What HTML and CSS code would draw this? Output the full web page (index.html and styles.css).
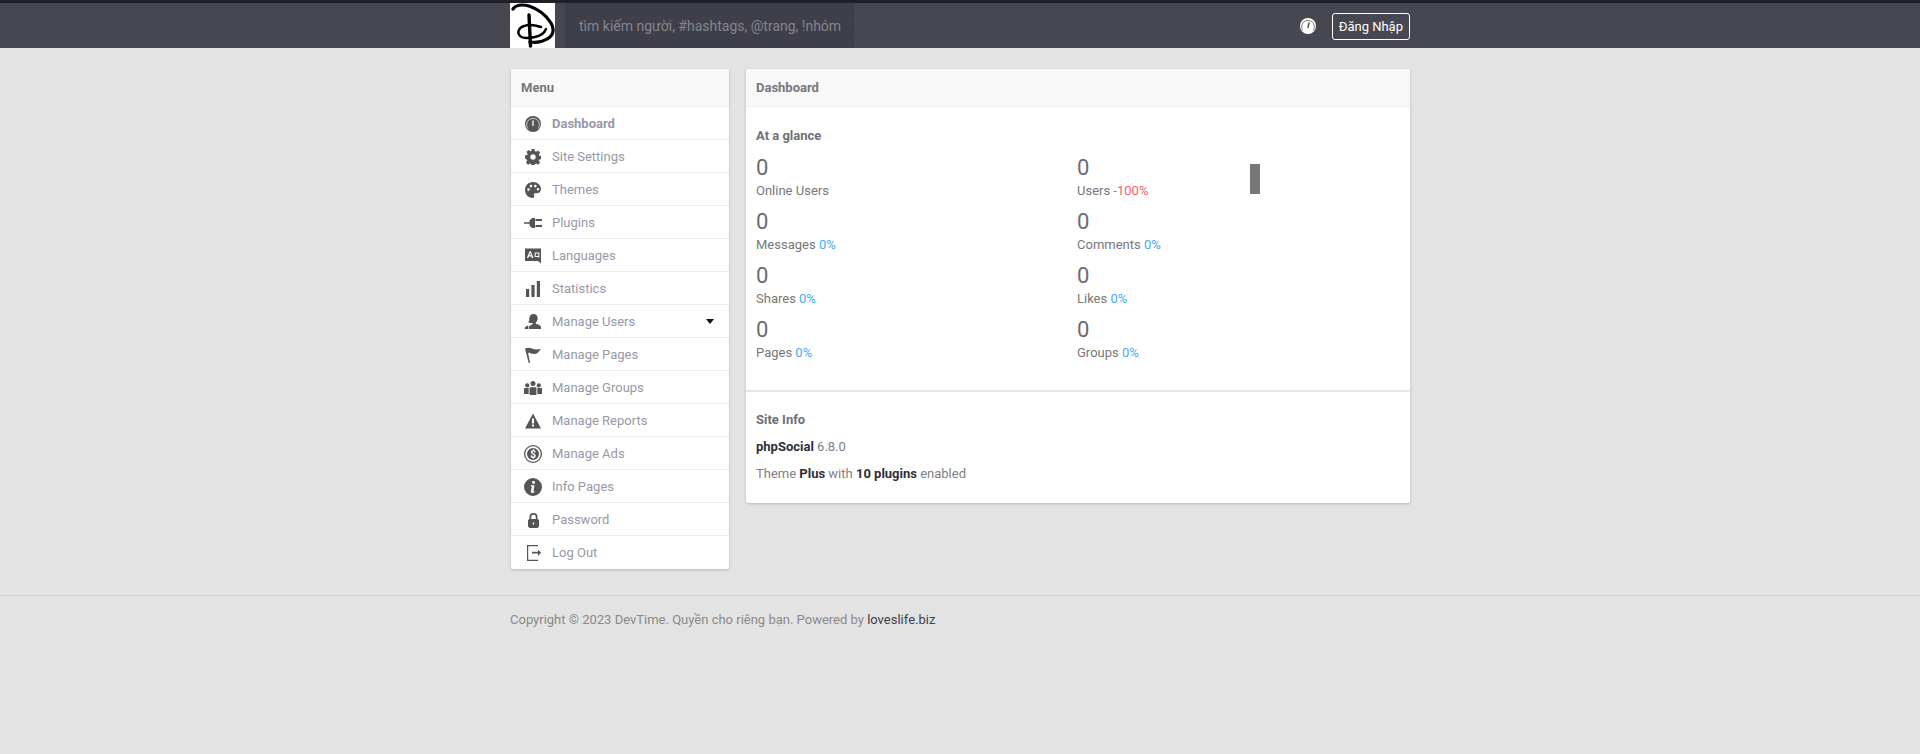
FILE: index.html
```html
<!DOCTYPE html>
<html lang="vi">
<head>
<meta charset="utf-8">
<title>Dashboard</title>
<link rel="stylesheet" href="styles.css">
</head>
<body>
<header class="topbar">
  <div class="wrap topbar-inner">
    <a class="logo" href="#">
      <svg viewBox="0 0 45 45" width="45" height="45"><g fill="none" stroke="#000" stroke-linecap="round"><path d="M3 6C5 2 12 1 19 3c9 3 17 9 22 17 4 7 2 13-4 16-5 3-11 4-17 3" stroke-width="3.200"/><path d="M19 12l1.500 31" stroke-width="3.400"/><path d="M31 24c-6-2-12-3-17-1-6 2-7 7-4 10 3 3 10 2 15 1 5-1 9-3 11-8" stroke-width="2.400"/></g></svg>
    </a>
    <div class="search">tìm kiếm người, #hashtags, @trang, !nhóm</div>
    <div class="top-actions">
      <svg class="gauge-top" viewBox="0 0 16 16" width="16" height="16"><circle cx="8" cy="8" r="8" fill="#fff"/><path fill="none" stroke="#484852" stroke-width=".7" d="M2.800 12.500A6.400 6.400 0 1 1 13.200 12.500"/><path fill="none" stroke="#484852" stroke-width="1.400" stroke-linecap="round" d="M8 9.500 9 5"/></svg>
      <a class="login" href="#">Đăng Nhập</a>
    </div>
  </div>
</header>

<main class="wrap layout">
  <aside class="card menu">
    <div class="card-head">Menu</div>
    <ul class="menu-list">
      <li class="active"><svg class="ico" viewBox="0 0 16 16"><circle cx="8" cy="8" r="8"/><path class="cut" stroke-width=".7" d="M2.800 12.500A6.400 6.400 0 1 1 13.200 12.500"/><path class="cut" stroke-width="1.300" stroke-linecap="round" d="M8 9.500 8 5"/></svg>Dashboard</li>
      <li><svg class="ico" viewBox="0 0 16 16"><path fill-rule="evenodd" d="M6.500 0h3l.4 2.300 1.200.5 1.900-1.300 2.100 2.100-1.300 1.900.5 1.200 2.300.4v3l-2.300.4-.5 1.200 1.300 1.900-2.100 2.100-1.900-1.300-1.200.5-.4 2.300h-3l-.4-2.300-1.200-.5-1.900 1.300-2.100-2.100 1.300-1.900-.5-1.200L-.1 9.500v-3l2.300-.4.5-1.200L1.400 3l2.100-2.100 1.900 1.300 1.200-.5zM8 5.300a2.700 2.700 0 1 0 0 5.400 2.700 2.700 0 0 0 0-5.400z"/></svg>Site Settings</li>
      <li><svg class="ico" viewBox="0 0 16 16"><path fill-rule="evenodd" d="M8 0c4.400 0 8 3 8 7 0 2.700-2 4.300-4.500 4.300H10c-1 0-1.500.8-1 1.600.5.900.2 3.100-1.200 3.100C3.400 16 0 12.400 0 8s3.600-8 8-8zM3.500 6.200a1.300 1.300 0 1 0 0 2.600 1.300 1.300 0 0 0 0-2.600zM6 2.800a1.300 1.300 0 1 0 0 2.600 1.300 1.300 0 0 0 0-2.600zM10.300 2.800a1.300 1.300 0 1 0 0 2.600 1.300 1.300 0 0 0 0-2.600zM13 6a1.300 1.300 0 1 0 0 2.600A1.300 1.300 0 0 0 13 6z"/></svg>Themes</li>
      <li><svg class="ico ico-18" viewBox="0 0 18 12"><path d="M0 5.200h5.500V3.400L8 1h3v10H8L5.500 8.600V6.800H0zM11.500 2H18v2h-6.500zM11.500 8H18v2h-6.500z"/></svg>Plugins</li>
      <li><svg class="ico" viewBox="0 0 16 16"><path fill-rule="evenodd" d="M0 .5h16v15l-3-2.500H0zM4.600 3.200 1.800 10h1.500l.5-1.400h2.600l.5 1.400h1.500L5.800 3.200zM5.200 5l.8 2.300H4.300zM9.700 4.500V9h3.300l1.300 1V4.500zM10.700 5.500h2.600v2.500h-2.600z"/></svg>Languages</li>
      <li><svg class="ico" viewBox="0 0 16 16"><path d="M1 8h3.200v8H1zM6.400 4h3.200v12H6.400zM11.800 0H15v16h-3.200z"/></svg>Statistics</li>
      <li class="has-caret"><svg class="ico ico-18" viewBox="0 0 17 16"><path d="M9 0c2.600 0 4.200 1.800 4.200 4.300 0 1.800-.8 3.300-1.900 4.100v1.300c2.400.7 5.200 1.800 5.200 3.300V15H4.500v-1.700c0-1.400 1.600-2.700 3.700-3.400V9C6.500 9.200 4.600 9 3.600 8.300c.9-.8 1.200-2 1.200-3.800C4.800 1.900 6.500 0 9 0z"/><path d="M0 15c0-1.900 1.600-2.900 3.800-3.500V15z"/></svg>Manage Users<i class="caret"></i></li>
      <li><svg class="ico" viewBox="0 0 16 16"><path d="M0 1.500C2.500 .3 4.800 .5 7 1.500c2.800 1.200 5.600 1.200 9 .3-1.200 1.700-2.300 3.100-3.800 4.500-2.800 1.300-4.600.9-7.400-.3-.6-.2-1.100-.3-1.700-.2L5 16H3.700z"/></svg>Manage Pages</li>
      <li><svg class="ico ico-18" viewBox="0 0 18 14"><circle cx="9" cy="2.600" r="2.500"/><circle cx="3.200" cy="4.400" r="2.100"/><circle cx="14.800" cy="4.400" r="2.100"/><path d="M5.600 6.200h6.800V14H5.600zM0 7h4.700v6H0zM13.300 7H18v6h-4.700z"/></svg>Manage Groups</li>
      <li><svg class="ico" viewBox="0 0 16 15"><path fill-rule="evenodd" d="M8 0l8 15H0zM7 5v5h2V5zM7 11v2h2v-2z"/></svg>Manage Reports</li>
      <li><svg class="ico ico-18 tall" viewBox="0 0 18 18"><path fill-rule="evenodd" d="M9 0a9 9 0 1 1 0 18A9 9 0 0 1 9 0zM9 1.300a7.700 7.700 0 1 0 0 15.400A7.700 7.700 0 0 0 9 1.300zM9 3a6 6 0 1 1 0 12A6 6 0 0 1 9 3z"/><text class="dollar" x="9" y="12.800" text-anchor="middle">$</text></svg>Manage Ads</li>
      <li><svg class="ico ico-18 tall" viewBox="0 0 16 16"><path fill-rule="evenodd" d="M8 0a8 8 0 1 1 0 16A8 8 0 0 1 8 0zM8.500 2.700a1.300 1.300 0 1 0 0 2.600 1.300 1.300 0 0 0 0-2.600zM6 6.500v1h1l-.9 4.200c-.2 1.200.6 1.800 1.700 1.600l1.500-.6v-.9H8.400l.9-5.300z"/></svg>Info Pages</li>
      <li><svg class="ico ico-lock" viewBox="0 0 11 15"><path fill-rule="evenodd" d="M1.500 6V4a4 4 0 0 1 8 0v2l1.500 1v6.500L9.500 15h-8L0 13.500V7zM3.200 6h4.600V4a2.300 2.300 0 0 0-4.600 0zM4.800 9.500v2h1.400v-2z"/></svg>Password</li>
      <li><svg class="ico" viewBox="0 0 16 16"><path d="M2 0h11v1.300H3.200v13.400H13V16H2zM13 4.500V6.800H7v1.800h6v2.300l3-3.200z"/></svg>Log Out</li>
    </ul>
  </aside>

  <section class="card content">
    <div class="card-head">Dashboard</div>
    <div class="panel glance">
      <h3 class="panel-title">At a glance</h3>
      <div class="stats">
        <div class="stat"><div class="num">0</div><div class="lbl">Online Users</div></div>
        <div class="stat"><div class="num">0</div><div class="lbl">Users <span class="down">-100%</span></div></div>
        <div class="stat"><div class="num">0</div><div class="lbl">Messages <span class="up">0%</span></div></div>
        <div class="stat"><div class="num">0</div><div class="lbl">Comments <span class="up">0%</span></div></div>
        <div class="stat"><div class="num">0</div><div class="lbl">Shares <span class="up">0%</span></div></div>
        <div class="stat"><div class="num">0</div><div class="lbl">Likes <span class="up">0%</span></div></div>
        <div class="stat"><div class="num">0</div><div class="lbl">Pages <span class="up">0%</span></div></div>
        <div class="stat"><div class="num">0</div><div class="lbl">Groups <span class="up">0%</span></div></div>
      </div>
      <div class="chart-bar"></div>
    </div>
    <div class="panel info">
      <h3 class="panel-title">Site Info</h3>
      <p><b>phpSocial</b> 6.8.0</p>
      <p>Theme <b>Plus</b> with <b>10 plugins</b> enabled</p>
    </div>
  </section>
</main>

<footer class="footer">
  <div class="wrap footer-text">Copyright © 2023 DevTime. Quyền cho riêng bạn. Powered by <a href="#">loveslife.biz</a></div>
</footer>
</body>
</html>
```
FILE: styles.css
```css
* { box-sizing: border-box; }
html, body { margin: 0; padding: 0; }
body {
  background: #e3e3e3;
  color: #777;
  font-family: Roboto, "Noto Sans", sans-serif;
  font-size: 13px;
  line-height: 18px;
  min-height: 754px;
}
a { color: inherit; text-decoration: none; }
.wrap { width: 900px; margin: 0 auto; }

.topbar {
  height: 48px;
  border-top: 3px solid #1f1f27;
  background-color: #484852;
  background-image: repeating-linear-gradient(45deg, rgba(0,0,0,.05) 0 1px, transparent 1px 3px);
}
.topbar-inner { display: flex; height: 45px; align-items: stretch; }
.logo { width: 45px; height: 45px; background: #fff; display: block; flex: none; }
.logo svg { display: block; }
.search {
  width: 289px;
  margin-left: 10px;
  padding-left: 14px;
  background: #3f3f49;
  color: #85858d;
  font-size: 14px;
  line-height: 46px;
}
.top-actions { margin-left: auto; display: flex; align-items: center; gap: 16px; }
.login {
  height: 27px;
  padding: 0 6px;
  border: 1px solid #fff;
  border-radius: 3px;
  color: #fff;
  font-size: 13px;
  line-height: 25px;
  margin-top: 2px;
}

.layout { display: flex; gap: 17px; align-items: flex-start; padding-top: 21px; }
.card {
  background: #fff;
  border-radius: 2px;
  box-shadow: 0 1px 3px rgba(0,0,0,.2);
}
.card-head {
  height: 38px;
  padding: 0 10px;
  background: #f8f8f8;
  border-bottom: 1px solid #eeeeee;
  border-radius: 2px 2px 0 0;
  font-weight: 700;
  font-size: 13px;
  line-height: 37px;
  color: #777;
}
.menu { width: 218px; margin-left: 1px; flex: none; }
.menu-list { list-style: none; margin: 0; padding: 0; }
.menu-list li {
  position: relative;
  display: flex;
  align-items: center;
  height: 33px;
  padding: 2px 0 0 14px;
  color: #9898a8;
  border-bottom: 1px solid #eeeeee;
}
.menu-list li:last-child { border-bottom-color: transparent; }
.menu-list li.active { font-weight: 700; }
.ico {
  width: 16px;
  height: 16px;
  margin-right: 11px;
  fill: #555;
  flex: none;
}
.ico-18 { width: 18px; margin-left: -1px; margin-right: 10px; }
.ico-lock { width: 11px; height: 15px; margin-left: 3px; margin-right: 13px; }
.tall { height: 18px; }
.cut { fill: none; stroke: #fff; }
.dollar { font-size: 10px; font-weight: 700; fill: #fff; }
.caret {
  position: absolute;
  right: 15px;
  top: 14px;
  border-top: 5px solid #111;
  border-left: 4px solid transparent;
  border-right: 4px solid transparent;
}

.content { flex: 1; min-width: 0; }
.panel { position: relative; padding: 0 10px; }
.panel-title { margin: 0; font-size: 13px; font-weight: 700; line-height: 18px; color: #6f6f76; }
.glance { padding-top: 20px; padding-bottom: 21px; border-bottom: 2px solid #e6e6e6; }
.stats { display: grid; grid-template-columns: 321px 1fr; grid-auto-rows: 54px; margin-top: 8px; }
.num { font-size: 22px; line-height: 30px; color: #6b6b72; }
.lbl { line-height: 18px; margin-top: -1px; }
.up { color: #45aaf2; }
.down { color: #fc5c65; }
.chart-bar {
  position: absolute;
  left: 504px;
  top: 57px;
  width: 10px;
  height: 30px;
  background: #777;
}
.info { padding-top: 19px; padding-bottom: 20px; }
.info p { margin: 9px 0 0; color: #808088; }
.info b { color: #2f2f38; }

.footer { margin-top: 26px; border-top: 1px solid #d4d4d4; padding-top: 15px; }
.footer-text { color: #8a8a8a; }
.footer-text a { color: #3f3f49; }
```
